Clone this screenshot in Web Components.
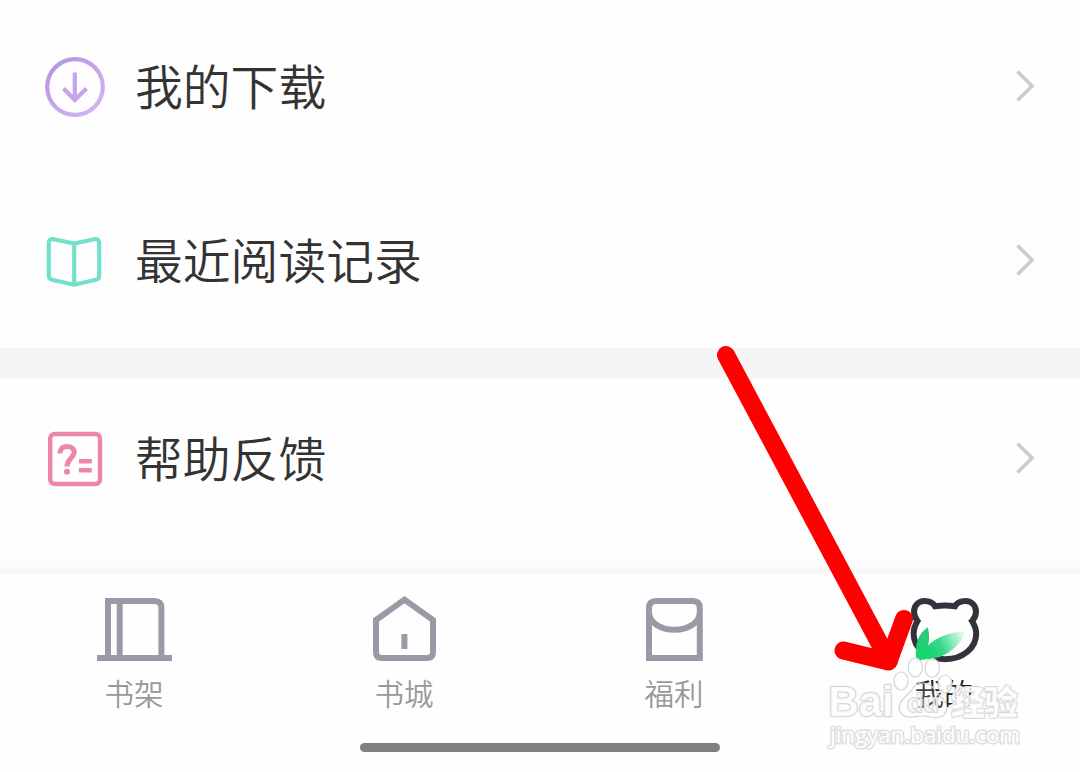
<!DOCTYPE html>
<html lang="zh-CN">
<head>
<meta charset="utf-8">
<title>我的</title>
<style>
html,body{margin:0;padding:0;background:#fefefe}
body{width:1080px;height:772px;overflow:hidden;font-family:"Noto Sans CJK SC",sans-serif}
</style>
</head>
<body>
<profile-page></profile-page>
<script>
const ICONS = {
download:`<svg viewBox="0 0 60 60" width="60" height="60" fill="none" stroke="url(#g)" stroke-width="4.2"><defs><linearGradient id="g" gradientUnits="userSpaceOnUse" x1="8" y1="5" x2="52" y2="55"><stop stop-color="#b894e6"/><stop offset="1" stop-color="#d1b5f2"/></linearGradient></defs><circle cx="30" cy="30" r="27.8"/><path stroke="#c7a4ef" d="M29.8 15.5V43M18.5 31.5 29.8 43 41.5 31.5"/></svg>`,
book:`<svg viewBox="0 0 60 60" width="60" height="60" fill="none" stroke="#72e0cb" stroke-width="4.2" stroke-linejoin="round"><path d="M29.2 12.5 8.5 8.2Q3.8 7.6 3.8 12V44.5Q3.8 47.8 7 48.8L29.2 53.8 51 48.8Q54.2 47.8 54.2 44.5V12Q54.2 7.6 49.5 8.2ZM29.2 12.5V53.8"/></svg>`,
help:`<svg viewBox="0 0 60 60" width="60" height="60" fill="none" stroke="#ed87a9" stroke-width="4.4"><rect x="5.2" y="5" width="49.8" height="50" rx="4.5"/><path stroke-width="5" d="M14.8 24.5C15 19.8 18 17.4 22 17.4C26.2 17.4 29.2 19.5 29.2 23.3C29.2 28.8 22 29.5 22 37.5"/><path d="M34 32.2H46.8M34 41.3H46.8"/><circle cx="22" cy="42.7" r="3" fill="#ed87a9" stroke="none"/></svg>`,
shelf:`<svg viewBox="0 0 80 70" width="80" height="70" fill="none" stroke="#9c99a6" stroke-width="6"><path d="M2 64H77M13 64V7H59.5Q66.4 7 66.4 14V64M24.7 7V64"/></svg>`,
store:`<svg viewBox="0 0 80 70" width="80" height="70" fill="none" stroke="#9c99a6" stroke-width="6"><path d="M11 26 39.5 5.6 68 26V58Q68 64 62 64H17Q11 64 11 58Z"/><path d="M39.4 40V55"/></svg>`,
gift:`<svg viewBox="0 0 80 70" width="80" height="70" fill="none" stroke="#9c99a6" stroke-width="6"><path d="M14 64V14Q14 7 21 7H57.8Q64.8 7 64.8 14V64ZM14 18C14 29 26 35.8 39.4 35.8S64.8 29 64.8 18"/></svg>`,
bear:`<svg viewBox="0 0 80 70" width="80" height="70"><defs><linearGradient id="l" gradientUnits="userSpaceOnUse" x1="22" y1="55" x2="58" y2="38"><stop stop-color="#15d66f"/><stop offset=".35" stop-color="#35d987"/><stop offset="1" stop-color="#e9fbf3"/></linearGradient><linearGradient id="s" x1="0" y1="0" x2="0" y2="1"><stop stop-color="#2fc77f"/><stop offset="1" stop-color="#10d868"/></linearGradient></defs><path fill="#fefefe" stroke="#34333b" stroke-width="6" d="M30 12.3C28 8.5 24 7 19.5 7C13.5 7 9 11.5 9 17.5C9 21 10.5 24.5 12.5 27C10 31 8.6 35 8.6 39.5C8.6 54 22 65.2 40 65.2S71.2 54 71.2 39.5C71.2 35 69.5 31 67 27C69.5 24.5 71 21 71 17.5C71 11.5 66.5 7 60.5 7C56 7 52 8.5 50 12.3Q40 10.8 30 12.3Z"/><path fill="url(#l)" d="M11.5 68.3C17 54 30 42 51 38.3Q59 37 59 39C58 47 48 57 38 61.5C29 66 17 64 11.5 68.3Z"/><path fill="url(#s)" d="M22.8 33.3C13 40 9 50 11.5 68.3C20 63 27 51 22.8 33.3Z"/></svg>`
};

function define(name, html, setup){
  customElements.define(name, class extends HTMLElement{
    constructor(){
      super();
      const t=document.createElement('template');
      t.innerHTML=html;
      this.attachShadow({mode:'open'}).append(t.content.cloneNode(true));
    }
    connectedCallback(){ if(setup) setup(this,this.shadowRoot); }
  });
}

define('app-icon',`<style>:host{display:block;flex:none}svg{display:block}</style>`,(el,root)=>{
  root.innerHTML+=ICONS[el.getAttribute('name')];
});

define('menu-row',`<style>
:host{display:flex;box-sizing:border-box;align-items:center;height:174px;padding:0 44px 0 45px;background:#fefefe}
:host([compact]){height:162px}
.label{flex:1;margin:0 0 4px 30px;font-size:47.8px;line-height:60px;color:#333;font-weight:350;white-space:nowrap}
.chevron{display:block;margin-bottom:2px}
</style><app-icon></app-icon><span class="label"><slot></slot></span>
<svg class="chevron" width="20" height="36" viewBox="0 0 20 36" fill="none" stroke="#cdcdd1" stroke-width="3.8"><path d="M1.5 3.5 16 18 1.5 32.5"/></svg>`);

define('section-gap',`<style>:host{display:block;height:30px;background:#f5f5f5}</style>`);

define('tab-item',`<style>
:host{display:flex;flex-direction:column;align-items:center;flex:1;color:#999;font-weight:350}
:host([active]){color:#222}
span{font-size:29.5px;line-height:40px;margin:8px 2px 0 0;white-space:nowrap}
</style><app-icon></app-icon><span><slot></slot></span>`);

define('tab-bar',`<style>
:host{display:flex;flex-direction:column;height:198px;background:#fefefe}
nav{display:flex;height:149px;padding-top:20px}
.home{width:360px;height:9px;border-radius:5px;background:#808080;align-self:center}
</style><nav><slot></slot></nav><div class="home"></div>`);

define('red-arrow',`<style>:host{position:absolute;left:0;top:0}svg{display:block}</style>
<svg width="1080" height="772" fill="none" stroke="#fe0000" stroke-width="18" stroke-linecap="round" stroke-linejoin="round"><path d="M726 355 889 661M843.5 650.5 888.5 661.5 904 619"/></svg>`);

define('site-watermark',`<style>
:host{position:absolute;left:820px;top:650px}
svg{display:block}
text{font-family:"Liberation Sans","Noto Sans CJK SC",sans-serif;font-weight:700;paint-order:stroke}
.cjk{font-family:"Noto Sans CJK SC",sans-serif;font-weight:900}
.url{font-family:"Open Sans",sans-serif;font-weight:400}
</style>
<svg width="210" height="105" fill="#fff" fill-opacity=".85" stroke="#d9d9d9" stroke-width="2" stroke-linejoin="round">
<g stroke-width="1.2" stroke="#d4d4d4">
<ellipse cx="81" cy="31" rx="7" ry="9"/><ellipse cx="95.3" cy="17.5" rx="7" ry="9.5"/><ellipse cx="112.3" cy="18" rx="7.2" ry="9.5"/><ellipse cx="125" cy="34" rx="7" ry="9"/>
<path fill-opacity=".15" d="M103 33C113 33 114 41 121 47C129 53 129 67 117 67.5C108 68 106 65 101 66C92 67.5 83 69 79.5 61C77.5 51 86 47 91 41C95 35 97 33 103 33Z"/>
</g>
<text x="8.5" y="66" font-size="43" textLength="65" lengthAdjust="spacingAndGlyphs" stroke-width="2.6">Bai</text>
<text x="87" y="62" font-size="26" textLength="32" lengthAdjust="spacingAndGlyphs" fill-opacity=".5">du</text>
<text class="cjk" x="131" y="64.5" font-size="34" textLength="67" fill-opacity=".8">经验</text>
<text class="url" x="10" y="92.5" font-size="22" textLength="190" lengthAdjust="spacingAndGlyphs" stroke="#e0e0e0" stroke-width="3.2" fill-opacity="1">jingyan.baidu.com</text>
</svg>`);

define('profile-page',`<style>
:host{display:flex;flex-direction:column;position:relative;width:1080px;height:772px;overflow:hidden;background:#fefefe}
.fill{flex:1;background:linear-gradient(#fefefe 0 55%,#fbfbfb 60%,#f8f8f8)}
</style>
<menu-row icon="download">我的下载</menu-row>
<menu-row icon="book">最近阅读记录</menu-row>
<section-gap></section-gap>
<menu-row compact icon="help">帮助反馈</menu-row>
<div class="fill"></div>
<tab-bar>
<tab-item icon="shelf">书架</tab-item>
<tab-item icon="store">书城</tab-item>
<tab-item icon="gift">福利</tab-item>
<tab-item active icon="bear">我的</tab-item>
</tab-bar>
<red-arrow></red-arrow>
<site-watermark></site-watermark>`,(el,root)=>{
  root.querySelectorAll('[icon]').forEach(n=>{
    const icon=document.createElement('app-icon');
    icon.setAttribute('name',n.getAttribute('icon'));
    n.shadowRoot.querySelector('app-icon').replaceWith(icon);
  });
});
</script>
</body>
</html>
